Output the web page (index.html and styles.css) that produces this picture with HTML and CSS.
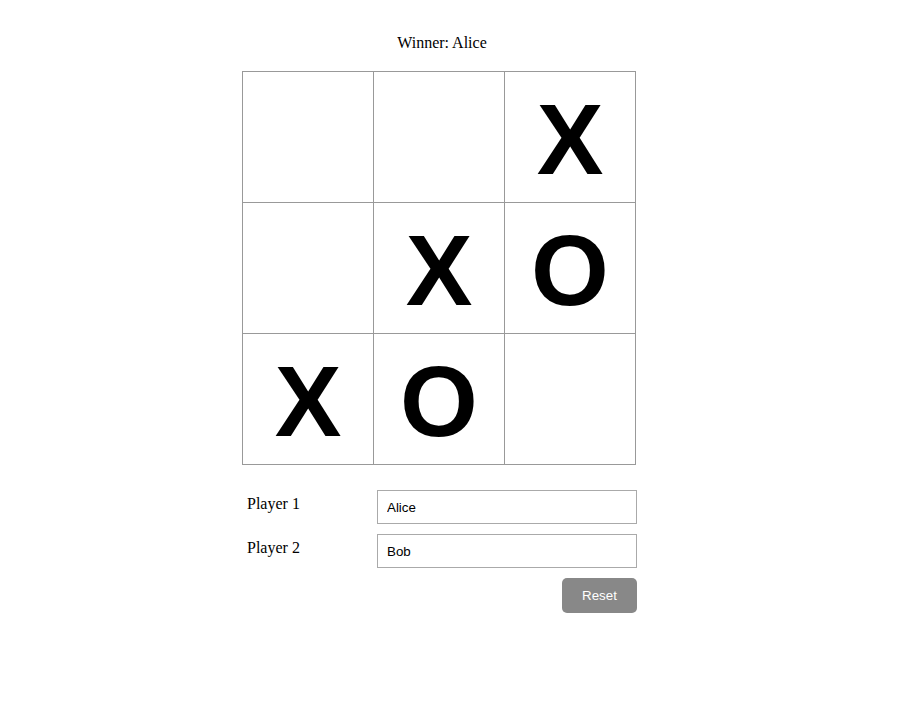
FILE: index.html
```html
<!DOCTYPE html>
<html lang="en">
<head>
    <meta charset="UTF-8">
    <title>Tic Tac Toe</title>
    <link rel="stylesheet" href="styles.css">
</head>
<body>
    <div class="game">
        <div class="status">Winner: Alice</div>

        <div class="board">
            <div class="cell"></div>
            <div class="cell"></div>
            <div class="cell">X</div>
            <div class="cell"></div>
            <div class="cell">X</div>
            <div class="cell">O</div>
            <div class="cell">X</div>
            <div class="cell">O</div>
            <div class="cell"></div>
        </div>

        <form class="players">
            <div class="player-row">
                <label for="player1">Player 1</label>
                <input type="text" id="player1" value="Alice">
            </div>
            <div class="player-row">
                <label for="player2">Player 2</label>
                <input type="text" id="player2" value="Bob">
            </div>
            <div class="actions">
                <button type="button">Reset</button>
            </div>
        </form>
    </div>
</body>
</html>
```

FILE: styles.css
```css
* {
    box-sizing: border-box;
}

body {
    margin: 0;
    padding-right: 31px;
    display: flex;
    justify-content: center;
    font-family: 'Liberation Serif', 'Times New Roman', serif;
    font-size: 16px;
    color: #000;
    background: #fff;
}

.game {
    width: 395px;
    margin-top: 33px;
}

.status {
    text-align: center;
    line-height: 19px;
    margin-bottom: 19px;
    padding-left: 5px;
}

.board {
    width: 394px;
    display: grid;
    grid-template-columns: repeat(3, 130px);
    grid-auto-rows: 130px;
    gap: 1px;
    background: #999;
    border: 1px solid #999;
}

.cell {
    background: #fff;
    display: flex;
    justify-content: center;
    align-items: center;
    font-family: 'Liberation Sans', Arial, sans-serif;
    font-weight: bold;
    font-size: 100px;
    line-height: 1;
    padding-top: 3px;
}

.players {
    margin-top: 25px;
}

.player-row {
    display: flex;
    margin-bottom: 10px;
}

.player-row label {
    width: 135px;
    padding: 5px 5px 0;
}

.player-row input {
    width: 260px;
    height: 34px;
    padding: 0 9px;
    border: 1px solid #aaa;
    font-family: 'Liberation Sans', Arial, sans-serif;
    font-size: 13.33px;
    color: #000;
    outline: none;
}

.actions {
    display: flex;
    justify-content: flex-end;
}

.actions button {
    width: 75px;
    height: 35px;
    border: none;
    border-radius: 5px;
    background: #888;
    color: #fff;
    font-family: 'Liberation Sans', Arial, sans-serif;
    font-size: 13.33px;
    cursor: pointer;
}
```
